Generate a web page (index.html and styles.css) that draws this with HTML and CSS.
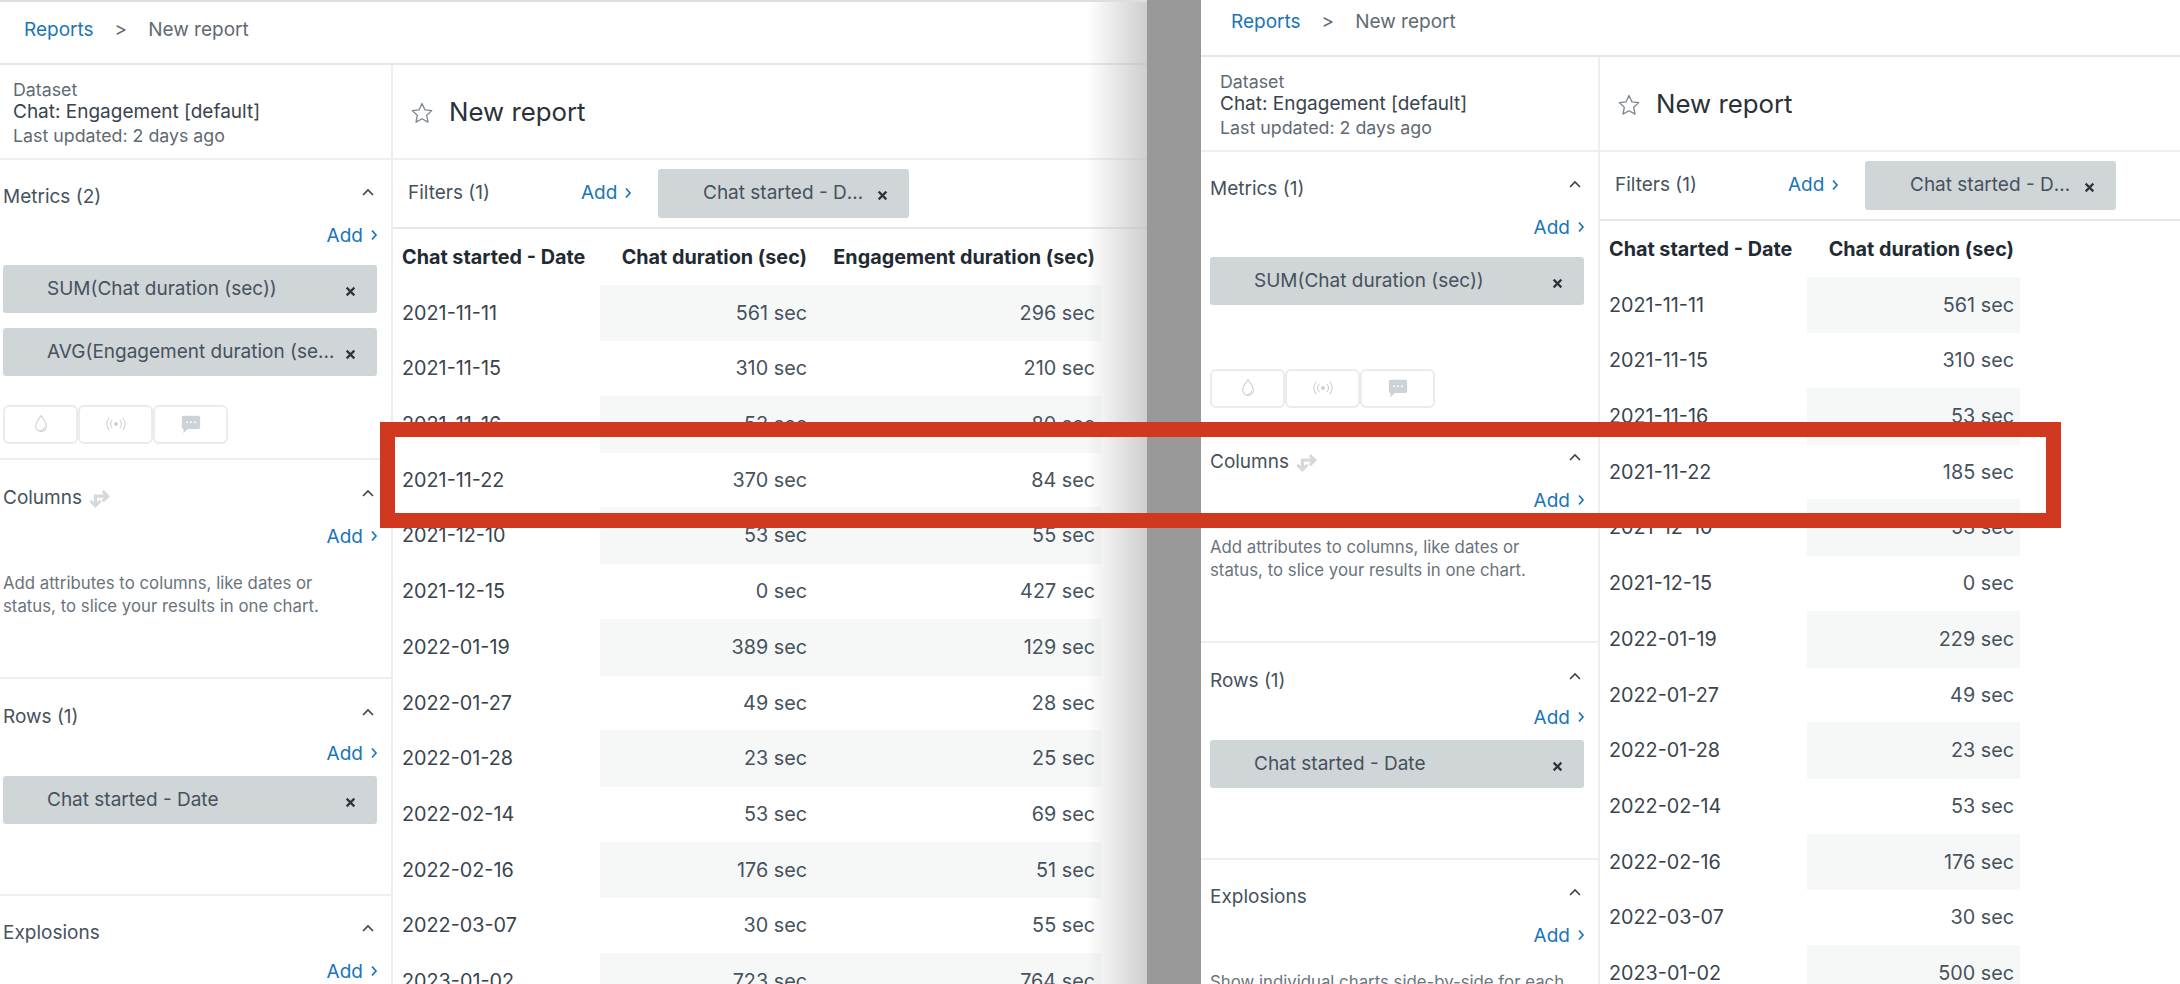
FILE: index.html
```html
<!DOCTYPE html>
<html lang="en">

<head>
    <meta charset="UTF-8">
    <meta name="viewport" content="width=device-width, initial-scale=1.0">
    <title>New report</title>
    <link rel="stylesheet" href="styles.css">
</head>

<body>
    <svg class="icon-defs" width="0" height="0">
        <symbol id="i-star" viewBox="0 0 24 24">
            <path d="M12 2.500l2.900 6.300 6.800.8-5 4.700 1.300 6.800-6-3.400-6 3.400 1.300-6.800-5-4.700 6.800-.8z" fill="none" stroke="currentColor" stroke-width="1.300" stroke-linejoin="round"/>
        </symbol>
        <symbol id="i-up" viewBox="0 0 16 10">
            <path d="M3 8L8 3l5 5" fill="none" stroke="currentColor" stroke-width="1.600"/>
        </symbol>
        <symbol id="i-close" viewBox="0 0 10 10">
            <path d="M1.500 1.500l7 7M8.500 1.500l-7 7" fill="none" stroke="currentColor" stroke-width="2"/>
        </symbol>
        <symbol id="i-next" viewBox="0 0 8 12">
            <path d="M2 1.500L6 6l-4 4.500" fill="none" stroke="currentColor" stroke-width="1.700"/>
        </symbol>
        <symbol id="i-drop" viewBox="0 0 20 24">
            <path d="M10 2c3 4.500 6.500 8 6.500 12.500a6.500 6.500 0 0 1-13 0C3.500 10 7 6.500 10 2z" fill="none" stroke="currentColor" stroke-width="1.300"/>
            <path d="M8 20c3 .5 6-1.500 6.500-5" fill="none" stroke="currentColor" stroke-width="1.300"/>
        </symbol>
        <symbol id="i-signal" viewBox="0 0 24 24">
            <circle cx="12" cy="12" r="2.500" fill="currentColor"/>
            <path d="M7.500 7a7 7 0 0 0 0 10M16.500 7a7 7 0 0 1 0 10M4 4.500a11 11 0 0 0 0 15M20 4.500a11 11 0 0 1 0 15" fill="none" stroke="currentColor" stroke-width="1.300"/>
        </symbol>
        <symbol id="i-chat" viewBox="0 0 24 24">
            <path d="M3 2h18a2 2 0 0 1 2 2v12a2 2 0 0 1-2 2H8l-5 5v-5a2 2 0 0 1-2-2V4a2 2 0 0 1 2-2z" fill="currentColor"/>
            <circle cx="7.500" cy="10" r="1.200" fill="#fff"/>
            <circle cx="12" cy="10" r="1.200" fill="#fff"/>
            <circle cx="16.500" cy="10" r="1.200" fill="#fff"/>
        </symbol>
        <symbol id="i-swap" viewBox="0 0 24 24">
            <path d="M7 20V10h13M15 4.500l5.500 5.500-5.500 5.500" fill="none" stroke="currentColor" stroke-width="3.400"/>
            <path d="M1.500 15l5.500 5.500 5.500-5.500" fill="none" stroke="currentColor" stroke-width="3.400"/>
        </symbol>
    </svg>

    <div class="stage">
        <!-- report with two metrics -->
        <section class="panel panel-left">
            <nav class="crumbs">
                <a class="crumb-link">Reports</a>
                <span class="crumb-sep">&gt;</span>
                <span class="crumb-current">New report</span>
            </nav>
            <div class="panel-body">
                <aside class="sidebar">
                    <div class="dataset">
                        <div class="dataset-label">Dataset</div>
                        <div class="dataset-name">Chat: Engagement [default]</div>
                        <div class="dataset-label dataset-date">Last updated: 2 days ago</div>
                    </div>

                    <div class="section section-metrics">
                        <div class="section-head"><span>Metrics (2)</span><svg class="chevron"><use href="#i-up"/></svg></div>
                        <div class="add-row"><a class="add-link">Add<svg class="next"><use href="#i-next"/></svg></a></div>
                        <div class="chips">
                            <div class="chip"><span class="chip-text">SUM(Chat duration (sec))</span><svg class="chip-x"><use href="#i-close"/></svg></div>
                            <div class="chip"><span class="chip-text">AVG(Engagement duration (sec))</span><svg class="chip-x"><use href="#i-close"/></svg></div>
                        </div>
                        <div class="channel-btns">
                            <div class="channel-btn"><svg class="channel-icon"><use href="#i-drop"/></svg></div>
                            <div class="channel-btn"><svg class="channel-icon"><use href="#i-signal"/></svg></div>
                            <div class="channel-btn"><svg class="channel-icon"><use href="#i-chat"/></svg></div>
                        </div>
                    </div>

                    <div class="section section-columns">
                        <div class="section-head"><span>Columns<svg class="swap"><use href="#i-swap"/></svg></span><svg class="chevron"><use href="#i-up"/></svg></div>
                        <div class="add-row"><a class="add-link">Add<svg class="next"><use href="#i-next"/></svg></a></div>
                        <p class="help">Add attributes to columns, like dates or status, to slice your results in one chart.</p>
                    </div>

                    <div class="section section-rows">
                        <div class="section-head"><span>Rows (1)</span><svg class="chevron"><use href="#i-up"/></svg></div>
                        <div class="add-row"><a class="add-link">Add<svg class="next"><use href="#i-next"/></svg></a></div>
                        <div class="chips">
                            <div class="chip"><span class="chip-text">Chat started - Date</span><svg class="chip-x"><use href="#i-close"/></svg></div>
                        </div>
                    </div>

                    <div class="section section-explosions">
                        <div class="section-head"><span>Explosions</span><svg class="chevron"><use href="#i-up"/></svg></div>
                        <div class="add-row"><a class="add-link">Add<svg class="next"><use href="#i-next"/></svg></a></div>
                        <p class="help help-explosions">Show individual charts side-by-side for each value.</p>
                    </div>
                </aside>

                <main class="report">
                    <div class="report-title"><svg class="star"><use href="#i-star"/></svg><h1>New report</h1></div>
                    <div class="filters">
                        <span class="filters-label">Filters (1)</span>
                        <a class="add-link">Add<svg class="next"><use href="#i-next"/></svg></a>
                        <div class="chip chip-filter"><span class="chip-text">Chat started - Date range</span><svg class="chip-x"><use href="#i-close"/></svg></div>
                    </div>
                    <div class="table">
                        <div class="row row-head"><div>Chat started - Date</div><div>Chat duration (sec)</div><div>Engagement duration (sec)</div></div>
                        <div class="row"><div>2021-11-11</div><div class="num">561 sec</div><div class="num">296 sec</div></div>
                        <div class="row"><div>2021-11-15</div><div class="num">310 sec</div><div class="num">210 sec</div></div>
                        <div class="row"><div>2021-11-16</div><div class="num">53 sec</div><div class="num">80 sec</div></div>
                        <div class="row"><div>2021-11-22</div><div class="num">370 sec</div><div class="num">84 sec</div></div>
                        <div class="row"><div>2021-12-10</div><div class="num">53 sec</div><div class="num">55 sec</div></div>
                        <div class="row"><div>2021-12-15</div><div class="num">0 sec</div><div class="num">427 sec</div></div>
                        <div class="row"><div>2022-01-19</div><div class="num">389 sec</div><div class="num">129 sec</div></div>
                        <div class="row"><div>2022-01-27</div><div class="num">49 sec</div><div class="num">28 sec</div></div>
                        <div class="row"><div>2022-01-28</div><div class="num">23 sec</div><div class="num">25 sec</div></div>
                        <div class="row"><div>2022-02-14</div><div class="num">53 sec</div><div class="num">69 sec</div></div>
                        <div class="row"><div>2022-02-16</div><div class="num">176 sec</div><div class="num">51 sec</div></div>
                        <div class="row"><div>2022-03-07</div><div class="num">30 sec</div><div class="num">55 sec</div></div>
                        <div class="row"><div>2023-01-02</div><div class="num">723 sec</div><div class="num">764 sec</div></div>
                    </div>
                </main>
            </div>
        </section>

        <!-- same report with one metric -->
        <section class="panel panel-right">
            <nav class="crumbs">
                <a class="crumb-link">Reports</a>
                <span class="crumb-sep">&gt;</span>
                <span class="crumb-current">New report</span>
            </nav>
            <div class="panel-body">
                <aside class="sidebar">
                    <div class="dataset">
                        <div class="dataset-label">Dataset</div>
                        <div class="dataset-name">Chat: Engagement [default]</div>
                        <div class="dataset-label dataset-date">Last updated: 2 days ago</div>
                    </div>

                    <div class="section section-metrics">
                        <div class="section-head"><span>Metrics (1)</span><svg class="chevron"><use href="#i-up"/></svg></div>
                        <div class="add-row"><a class="add-link">Add<svg class="next"><use href="#i-next"/></svg></a></div>
                        <div class="chips">
                            <div class="chip"><span class="chip-text">SUM(Chat duration (sec))</span><svg class="chip-x"><use href="#i-close"/></svg></div>
                        </div>
                        <div class="channel-btns">
                            <div class="channel-btn"><svg class="channel-icon"><use href="#i-drop"/></svg></div>
                            <div class="channel-btn"><svg class="channel-icon"><use href="#i-signal"/></svg></div>
                            <div class="channel-btn"><svg class="channel-icon"><use href="#i-chat"/></svg></div>
                        </div>
                    </div>

                    <div class="section section-columns">
                        <div class="section-head"><span>Columns<svg class="swap"><use href="#i-swap"/></svg></span><svg class="chevron"><use href="#i-up"/></svg></div>
                        <div class="add-row"><a class="add-link">Add<svg class="next"><use href="#i-next"/></svg></a></div>
                        <p class="help">Add attributes to columns, like dates or status, to slice your results in one chart.</p>
                    </div>

                    <div class="section section-rows">
                        <div class="section-head"><span>Rows (1)</span><svg class="chevron"><use href="#i-up"/></svg></div>
                        <div class="add-row"><a class="add-link">Add<svg class="next"><use href="#i-next"/></svg></a></div>
                        <div class="chips">
                            <div class="chip"><span class="chip-text">Chat started - Date</span><svg class="chip-x"><use href="#i-close"/></svg></div>
                        </div>
                    </div>

                    <div class="section section-explosions">
                        <div class="section-head"><span>Explosions</span><svg class="chevron"><use href="#i-up"/></svg></div>
                        <div class="add-row"><a class="add-link">Add<svg class="next"><use href="#i-next"/></svg></a></div>
                        <p class="help help-explosions">Show individual charts side-by-side for each value.</p>
                    </div>
                </aside>

                <main class="report">
                    <div class="report-title"><svg class="star"><use href="#i-star"/></svg><h1>New report</h1></div>
                    <div class="filters">
                        <span class="filters-label">Filters (1)</span>
                        <a class="add-link">Add<svg class="next"><use href="#i-next"/></svg></a>
                        <div class="chip chip-filter"><span class="chip-text">Chat started - Date range</span><svg class="chip-x"><use href="#i-close"/></svg></div>
                    </div>
                    <div class="table table-short">
                        <div class="row row-head"><div>Chat started - Date</div><div>Chat duration (sec)</div></div>
                        <div class="row"><div>2021-11-11</div><div class="num">561 sec</div></div>
                        <div class="row"><div>2021-11-15</div><div class="num">310 sec</div></div>
                        <div class="row"><div>2021-11-16</div><div class="num">53 sec</div></div>
                        <div class="row"><div>2021-11-22</div><div class="num">185 sec</div></div>
                        <div class="row"><div>2021-12-10</div><div class="num">53 sec</div></div>
                        <div class="row"><div>2021-12-15</div><div class="num">0 sec</div></div>
                        <div class="row"><div>2022-01-19</div><div class="num">229 sec</div></div>
                        <div class="row"><div>2022-01-27</div><div class="num">49 sec</div></div>
                        <div class="row"><div>2022-01-28</div><div class="num">23 sec</div></div>
                        <div class="row"><div>2022-02-14</div><div class="num">53 sec</div></div>
                        <div class="row"><div>2022-02-16</div><div class="num">176 sec</div></div>
                        <div class="row"><div>2022-03-07</div><div class="num">30 sec</div></div>
                        <div class="row"><div>2023-01-02</div><div class="num">500 sec</div></div>
                    </div>
                </main>
            </div>
        </section>

        <!-- callout across both panels -->
        <div class="highlight"></div>
    </div>
</body>

</html>
```

FILE: styles.css
```css
* {
    box-sizing: border-box;
}

body {
    margin: 0;
    font-family: "Inter", "Liberation Sans", sans-serif;
    color: #46525c;
}

.icon-defs {
    position: absolute;
}

.stage {
    position: relative;
    display: flex;
    width: 2180px;
    height: 984px;
    overflow: hidden;
    background: #999;
}

.panel {
    position: relative;
    flex: none;
    background: #fff;
    height: 1100px;
    border-top: 2px solid #dcdfe1;
}

.panel-left {
    width: 1153px;
    margin-left: -6px;
}

/* soft shadow where the left panel meets the gray band */
.panel-left::after {
    content: "";
    position: absolute;
    top: 0;
    right: 0;
    bottom: 0;
    width: 60px;
    background: linear-gradient(to right, rgba(190, 190, 190, 0), rgba(190, 190, 190, 0.75));
}

.panel-right {
    width: 979px;
    margin-left: 54px;
    margin-top: -8px;
}

.crumbs {
    display: flex;
    align-items: center;
    height: 63px;
    padding: 0 0 6px 30px;
    border-bottom: 2px solid #e4e7e9;
    font-size: 19px;
    color: #5f6a72;
}

.crumb-link {
    color: #1a75b8;
}

.crumb-sep {
    margin: 0 21px;
}

.panel-body {
    display: flex;
}

.sidebar {
    flex: none;
    width: 399px;
    border-right: 2px solid #eceef0;
}

.dataset {
    height: 95px;
    padding: 14px 0 0 19px;
    border-bottom: 2px solid #eceef0;
    font-size: 17.8px;
    line-height: 22px;
}

.dataset-label {
    color: #5f6a72;
}

.dataset-name {
    color: #39444d;
    font-size: 19px;
}

.dataset-date {
    margin-top: 2px;
}

.section {
    padding: 19px 13px 0 9px;
    border-bottom: 2px solid #eceef0;
}

.section-head {
    display: flex;
    justify-content: space-between;
    align-items: center;
    height: 36px;
    font-size: 19px;
    color: #46525c;
}

.chevron {
    width: 16px;
    height: 10px;
    margin: 0 2px 8px 0;
    color: #39444d;
}

.swap {
    width: 22px;
    height: 22px;
    margin-left: 7px;
    vertical-align: -5px;
    color: #d5d9dc;
}

.add-row {
    display: flex;
    justify-content: flex-end;
    align-items: center;
    height: 38px;
    margin-top: 2px;
}

.add-link {
    display: inline-flex;
    align-items: center;
    color: #1a75b8;
    font-size: 19px;
}

.next {
    width: 8px;
    height: 12px;
    margin-left: 7px;
}

.chips {
    display: flex;
    flex-direction: column;
    gap: 15px;
    min-height: 83px;
    margin-top: 4px;
}

.section-metrics .chips {
    margin-top: 11px;
}

.chip {
    display: flex;
    align-items: center;
    justify-content: space-between;
    height: 48px;
    margin-right: 1px;
    padding: 0 21px 0 44px;
    border-radius: 3px;
    background: #d0d5d8;
    font-size: 19px;
}

.chip-text {
    flex: 1;
    min-width: 0;
    padding-bottom: 2px;
    overflow: hidden;
    white-space: nowrap;
    text-overflow: ellipsis;
}

.chip-x {
    flex: none;
    width: 11px;
    height: 11px;
    margin: 4px 0 0 8px;
    color: #2c353d;
}

.channel-btns {
    display: flex;
    margin-top: 29px;
}

.channel-btn {
    display: flex;
    justify-content: center;
    padding-top: 7px;
    width: 75px;
    height: 39px;
    border: 2px solid #e9ebed;
    border-radius: 6px;
}

.channel-icon {
    width: 20px;
    height: 20px;
    color: #cdd2d6;
}

.section-metrics {
    padding-top: 18px;
    padding-bottom: 14px;
}

.section-columns {
    height: 219px;
}

.help {
    margin: 17px 0 0;
    width: 340px;
    font-size: 16.8px;
    line-height: 23px;
    color: #6a747c;
}

.help-explosions {
    width: 378px;
}

.section-rows {
    padding-bottom: 35px;
}

.section-rows .add-row {
    margin-top: 0;
}

.section-explosions {
    padding-top: 18px;
}

.report {
    flex: 1;
    min-width: 0;
}

.report-title {
    display: flex;
    align-items: center;
    height: 95px;
    padding-left: 17px;
    border-bottom: 2px solid #eceef0;
}

.star {
    width: 24px;
    height: 24px;
    margin-top: 3px;
    color: #7c868e;
}

.report-title h1 {
    margin: 0 0 0 15px;
    font-size: 25.800px;
    font-weight: 400;
    color: #2a3138;
}

.filters {
    display: flex;
    align-items: center;
    height: 69px;
    padding-left: 15px;
    border-bottom: 2px solid #e4e7e9;
    font-size: 19px;
}

.filters-label {
    width: 173px;
    padding-bottom: 2px;
}

.filters .add-link {
    width: 77px;
    padding-bottom: 2px;
}

.chip-filter {
    width: 251px;
    height: 49px;
    margin: 0;
    padding: 0 21px 0 45px;
}

.row {
    display: grid;
    grid-template-columns: 207px 213px 288px;
    height: 55.7px;
    font-size: 19.800px;
    line-height: 55.7px;
    white-space: nowrap;
}

.row > div {
    padding-top: 1px;
}

.table-short .row {
    grid-template-columns: 207px 213px;
}

.row > div:first-child {
    padding-left: 9px;
    color: #39444d;
}

.num {
    padding-right: 6px;
    text-align: right;
}

.row:nth-child(even) .num {
    background: #f6f8f8;
}

.row-head {
    font-weight: 700;
    color: #1f2a33;
}

.row-head > div {
    padding-right: 6px;
    text-align: right;
    color: #1f2a33;
}

.row-head > div:first-child {
    padding-right: 0;
    text-align: left;
    color: #1f2a33;
}

.highlight {
    position: absolute;
    left: 380px;
    top: 422px;
    width: 1681px;
    height: 106px;
    border: 15px solid #d0391f;
}
```
